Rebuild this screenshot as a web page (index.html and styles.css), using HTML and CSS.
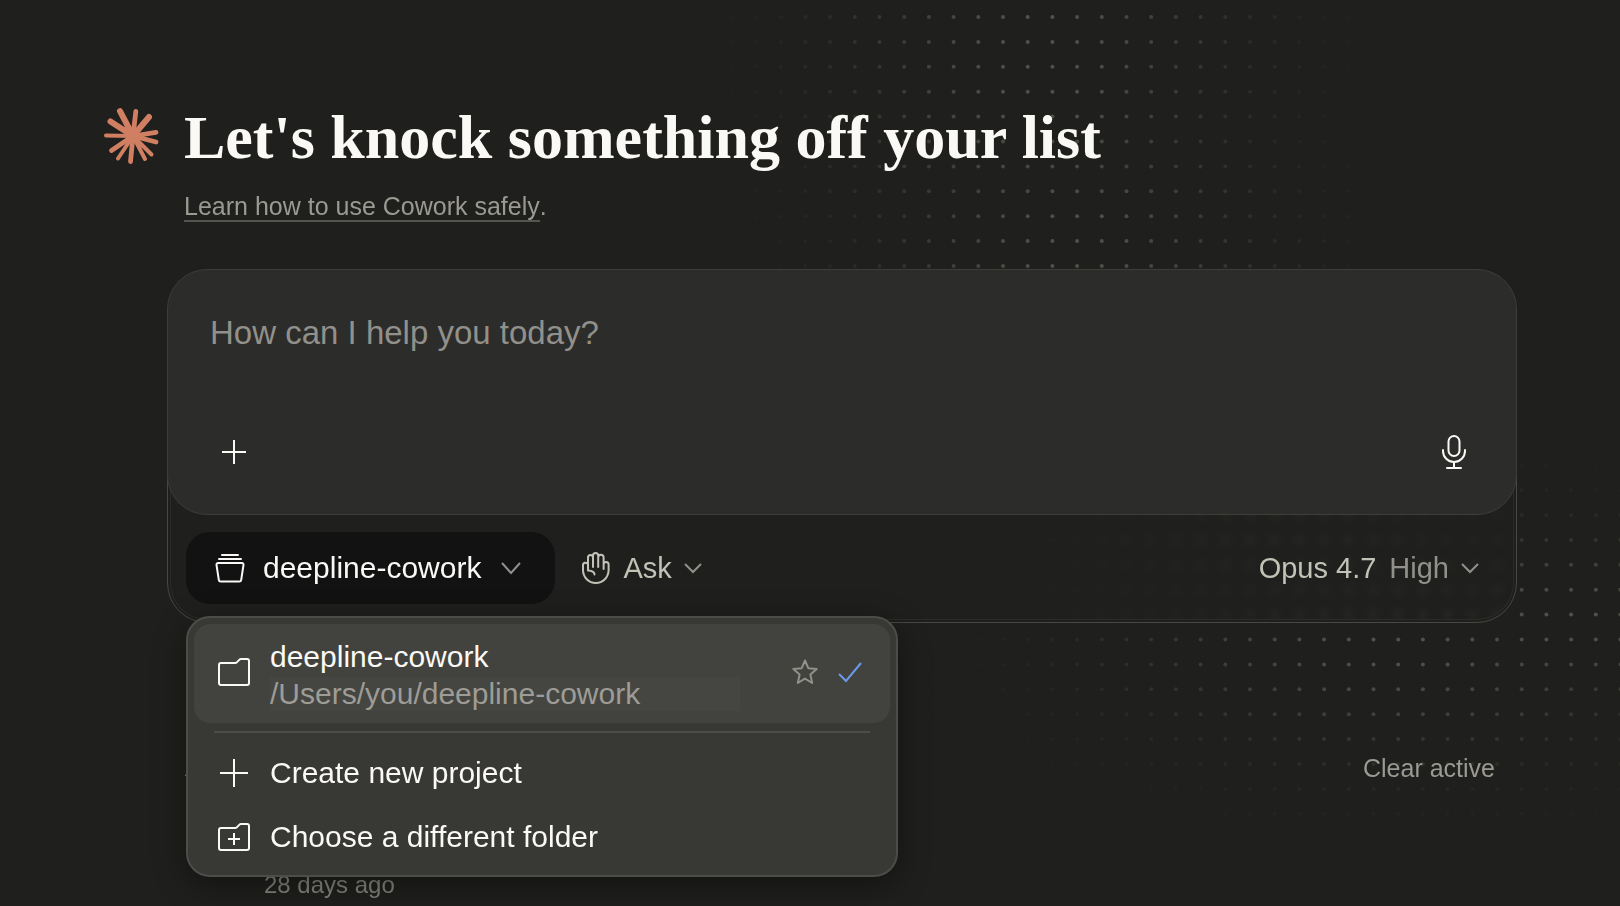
FILE: index.html
```html
<!DOCTYPE html>
<html lang="en">
<head>
    <meta charset="UTF-8">
    <meta name="viewport" content="width=device-width, initial-scale=1.0">
    <title>Cowork</title>
    <link rel="stylesheet" href="styles.css">
</head>
<body>
    <canvas id="dots" class="dots"></canvas>

    <main class="page">
        <header class="hero">
            <svg class="logo" viewBox="0 0 54 56" fill="none" stroke="#d07f62" stroke-linecap="round" aria-hidden="true">
                <path stroke-width="6" d="M29 28L16 3.200M29 28L6.500 13.500M29 28L45 9"/>
                <path stroke-width="4.800" d="M29 28L31.800 3.500M29 28L52 24.300M29 28L52 34M29 28L26.500 53.500M29 28L7.500 42.500"/>
                <path stroke-width="4" d="M29 28L2 27.500M29 28L47.500 46.500M29 28L41 51M29 28L14 50.500"/>
                <circle cx="29" cy="28" r="7" fill="#d07f62" stroke="none"/>
            </svg>
            <div>
                <h1 class="title">Let's knock something off your list</h1>
                <p class="subtitle"><a href="#safety">Learn how to use Cowork safely</a>.</p>
            </div>
        </header>

        <section class="composer">
            <div class="prompt-box">
                <textarea class="prompt" rows="1" placeholder="How can I help you today?" aria-label="Prompt"></textarea>
                <div class="prompt-actions">
                    <button class="icon-btn" aria-label="Add">
                        <svg width="24" height="24" viewBox="0 0 24 24" fill="none" stroke="currentColor" stroke-width="2"><path d="M12 0v24M0 12h24"/></svg>
                    </button>
                    <button class="icon-btn" aria-label="Dictate">
                        <svg width="26" height="34" viewBox="0 0 26 34" fill="none" stroke="currentColor" stroke-width="2" stroke-linecap="round">
                            <rect x="7.500" y="1" width="11" height="20" rx="5.500"/>
                            <path d="M2 15v1a11 11 0 0 0 22 0v-1M13 27v6M6 33h14"/>
                        </svg>
                    </button>
                </div>
            </div>

            <div class="toolbar">
                <div class="project-picker">
                    <button class="project-btn" aria-expanded="true">
                        <svg width="30" height="30" viewBox="0 0 30 30" fill="none" stroke="currentColor" stroke-width="2" stroke-linecap="round" stroke-linejoin="round">
                            <path d="M7 2h16M4 6h22M3 10h24a1.500 1.500 0 0 1 1.500 1.800l-2.300 15a2 2 0 0 1-2 1.700H5.800a2 2 0 0 1-2-1.700l-2.300-15A1.500 1.500 0 0 1 3 10z"/>
                        </svg>
                        <span>deepline-cowork</span>
                        <svg class="chevron" width="20" height="12" viewBox="0 0 20 12"><path d="M1 1l9 10 9-10"/></svg>
                    </button>

                    <div class="menu" role="menu">
                        <div class="menu-item selected" role="menuitem">
                            <svg width="32" height="28" viewBox="0 0 32 28" fill="none" stroke="currentColor" stroke-width="2" stroke-linejoin="round">
                                <path d="M3 5h14.500a1.500 1.500 0 0 0 1-.400l3-3a2 2 0 0 1 1.400-.600H29a2 2 0 0 1 2 2v22a2 2 0 0 1-2 2H3a2 2 0 0 1-2-2V7a2 2 0 0 1 2-2z"/>
                            </svg>
                            <div class="project">
                                <div class="project-name">deepline-cowork</div>
                                <div class="project-path">/Users/you/deepline-cowork</div>
                            </div>
                            <button class="star" aria-label="Add to favorites">
                                <svg width="26" height="26" viewBox="0 0 26 26" fill="none" stroke="currentColor" stroke-width="2" stroke-linejoin="round">
                                    <path d="M13 1.500l3.300 7.700 8.400.800-6.300 5.600 1.800 8.400-7.200-4.300-7.200 4.300 1.800-8.400-6.300-5.600 8.400-.800z"/>
                                </svg>
                            </button>
                            <svg class="check" width="24" height="20" viewBox="0 0 24 20"><path d="M1 12l7 7L23 1"/></svg>
                        </div>
                        <hr class="menu-divider">
                        <button class="menu-item" role="menuitem">
                            <svg width="32" height="28" viewBox="0 0 32 28" fill="none" stroke="currentColor" stroke-width="2"><path d="M16 0v28M2 14h28"/></svg>
                            <span>Create new project</span>
                        </button>
                        <button class="menu-item" role="menuitem">
                            <svg width="32" height="28" viewBox="0 0 32 28" fill="none" stroke="currentColor" stroke-width="2" stroke-linejoin="round">
                                <path d="M3 5h14.500a1.500 1.500 0 0 0 1-.400l3-3a2 2 0 0 1 1.400-.600H29a2 2 0 0 1 2 2v22a2 2 0 0 1-2 2H3a2 2 0 0 1-2-2V7a2 2 0 0 1 2-2zM16 10v12M10 16h12"/>
                            </svg>
                            <span>Choose a different folder</span>
                        </button>
                    </div>
                </div>

                <button class="tool-btn">
                    <svg width="28" height="32" viewBox="0 0 28 32" fill="none" stroke="currentColor" stroke-width="2" stroke-linecap="round" stroke-linejoin="round">
                        <path d="M6 18V5.500a2.500 2.500 0 0 1 5 0M11 15V3.500a2.600 2.600 0 0 1 5.200 0V15M16.200 5.500a2.700 2.700 0 0 1 5.400 0V17M21.600 12.500a2.500 2.500 0 0 1 5 0V18a12.800 13 0 0 1-25.600 0v-4.500a2.500 2.500 0 0 1 5-.500M6 18.500c4 .200 6.500 1.500 6.500 4"/>
                    </svg>
                    <span>Ask</span>
                    <svg class="chevron" width="16" height="10" viewBox="0 0 16 10"><path d="M0 1l8 8 8-8"/></svg>
                </button>

                <button class="tool-btn model-btn">
                    <span>Opus 4.7</span>
                    <span class="effort">High</span>
                    <svg class="chevron" width="16" height="10" viewBox="0 0 16 10"><path d="M0 1l8 8 8-8"/></svg>
                </button>
            </div>
        </section>

        <section class="sessions">
            <div class="sessions-head">
                <span>Active</span>
                <button class="clear-btn">Clear active</button>
            </div>
            <div class="session-time">28 days ago</div>
        </section>
    </main>

    <script src="dots.js"></script>
</body>
</html>
```
FILE: styles.css
```css
* {
    box-sizing: border-box;
}
body {
    margin: 0;
    min-height: 100vh;
    overflow: hidden;
    background-color: #1f1f1d;
    color: #faf9f5;
    font-family: "Liberation Sans", Arial, sans-serif;
    font-size: 30px;
}
button {
    padding: 0;
    border: none;
    background: none;
    color: inherit;
    font: inherit;
    cursor: pointer;
}
svg {
    display: block;
    flex: none;
    overflow: visible;
}
.dots {
    position: absolute;
    inset: 0;
    width: 100%;
    height: 100%;
}
.page {
    position: relative;
    padding: 100px 103px 0 104px;
}
.hero {
    display: flex;
    gap: 26px;
}
.logo {
    width: 54px;
    height: 56px;
    margin-top: 8px;
}
.title {
    margin: 0;
    font-family: "Liberation Serif", "Times New Roman", serif;
    font-size: 62px;
    font-weight: bold;
    line-height: 74px;
}
.subtitle {
    margin: 18px 0 0;
    color: #9a9992;
    font-size: 25px;
    line-height: 28px;
}
.subtitle a {
    display: inline-block;
    border-bottom: 2px solid #55554f;
    color: inherit;
    text-decoration: none;
}

/* Composer */
.composer {
    margin: 47px 0 0 63px;
}
.prompt-box {
    position: relative;
    z-index: 1;
    display: flex;
    flex-direction: column;
    justify-content: space-between;
    min-height: 246px;
    padding: 42px 49px 45px 42px;
    border: 1px solid #3d3d3a;
    border-radius: 40px;
    background-color: #2c2c2a;
}
.prompt {
    width: 100%;
    height: 42px;
    padding: 0;
    border: none;
    outline: none;
    background: none;
    color: inherit;
    font: inherit;
    font-size: 33px;
    line-height: 42px;
    resize: none;
}
.prompt::placeholder {
    color: #91908a;
    opacity: 1;
}
.prompt-actions {
    display: flex;
    align-items: center;
    justify-content: space-between;
    padding-left: 12px;
}
.toolbar {
    position: relative;
    display: flex;
    align-items: center;
    margin-top: -42px;
    padding: 58px 38px 18px 18px;
    border: 1px solid #474744;
    border-radius: 0 0 40px 40px;
    backdrop-filter: blur(4px);
    box-shadow: inset 0 0 0 2px #1f1f1d, inset 0 0 0 3px #2b2b29;
}

/* Project picker */
.project-picker {
    position: relative;
    z-index: 2;
}
.project-btn {
    display: flex;
    align-items: center;
    gap: 18px;
    height: 72px;
    padding: 0 34px 0 29px;
    border-radius: 24px;
    background-color: #121212;
}
.project-btn .chevron {
    margin-left: 2px;
}
.chevron,
.check {
    fill: none;
    stroke: #91908a;
    stroke-width: 2;
}
.menu {
    position: absolute;
    top: 84px;
    left: 0;
    width: 712px;
    padding: 6px;
    border: 2px solid #4c4c48;
    border-radius: 24px;
    background-color: #383834;
    box-shadow: 0 8px 32px rgba(0, 0, 0, 0.4);
}
.menu-item {
    display: flex;
    align-items: center;
    gap: 20px;
    width: 100%;
    height: 64px;
    padding: 0 28px 0 24px;
    border-radius: 16px;
    text-align: left;
}
.menu-item.selected {
    height: 99px;
    padding-bottom: 3px;
    background-color: #42423e;
}
.project {
    flex: 1;
    padding-top: 6px;
}
.project-name {
    margin-bottom: 2px;
    line-height: 36px;
}
.project-path {
    width: 470px;
    background-color: #454541;
    color: #9d9c96;
    line-height: 34px;
}
.star {
    color: #91908a;
}
.check {
    stroke: #6a9be8;
}
.menu-divider {
    margin: 8px 20px;
    border: none;
    border-top: 2px solid #4c4c48;
}

/* Toolbar buttons */
.tool-btn {
    display: flex;
    align-items: center;
    gap: 13px;
    margin-left: 27px;
    color: #c3c2b7;
    font-size: 29px;
}
.model-btn {
    margin-left: auto;
}
.effort {
    color: #91908a;
}

/* Session list behind the menu */
.sessions {
    margin: 130px 0 0 81px;
    color: #9a9992;
    font-size: 24px;
    line-height: 30px;
}
.sessions-head {
    display: flex;
    justify-content: space-between;
    padding-right: 22px;
}
.clear-btn {
    font-size: 25px;
}
.session-time {
    margin: 87px 0 0 79px;
    color: #84837c;
}
```
FILE: dots.js
```js
const canvas = document.getElementById('dots');
const ctx = canvas.getContext('2d');
const STEP = 24.7;

// Each glow lights up the dots around it
const glows = [
    { x: 1040, y: 40, rx: 130, ry: 190 },
    { x: 1070, y: 250, rx: 125, ry: 110 },
    { x: 1290, y: 540, rx: 120, ry: 40 },
    { x: 1580, y: 620, rx: 160, ry: 60 },
    { x: 1400, y: 640, rx: 180, ry: 80 }
];

function brightness(x, y) {
    let value = 0;
    for (const g of glows) {
        const dx = (x - g.x) / g.rx;
        const dy = (y - g.y) / g.ry;
        value = Math.max(value, Math.exp(-(dx * dx + dy * dy) / 2));
    }
    return value;
}

function drawDots() {
    canvas.width = canvas.clientWidth;
    canvas.height = canvas.clientHeight;
    for (let y = 17; y < canvas.height; y += STEP + 0.2) {
        for (let x = 15; x < canvas.width + STEP; x += STEP) {
            ctx.fillStyle = `rgba(200, 198, 186, ${brightness(x, y) * 0.3})`;
            ctx.beginPath();
            ctx.arc(x, y, 2, 0, Math.PI * 2);
            ctx.fill();
        }
    }
}

drawDots();
window.addEventListener('resize', drawDots);
```
